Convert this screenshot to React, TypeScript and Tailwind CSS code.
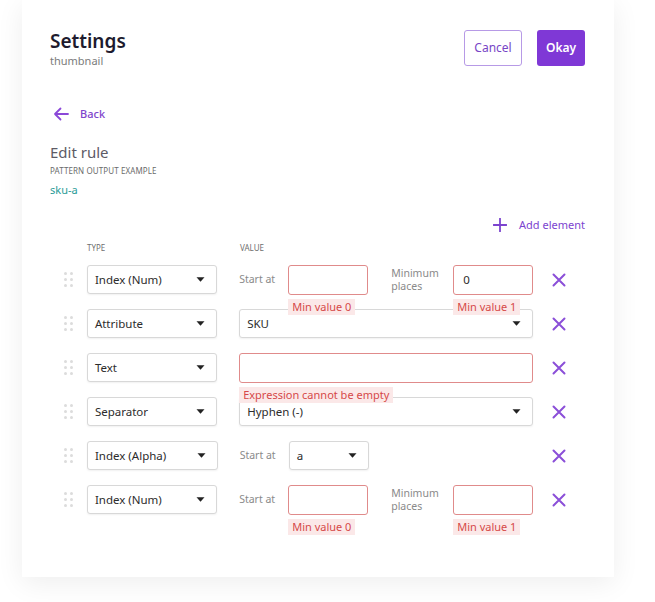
import { ReactNode } from 'react';

const font = { fontFamily: '"Noto Sans", "Open Sans", sans-serif' };

function DragHandle() {
  return (
    <div className="w-[37px] flex justify-start pl-[14px]">
      <div className="grid grid-cols-2 gap-x-[3px] gap-y-[3px]">
        {Array.from({ length: 6 }).map((_, i) => (
          <span key={i} className="block w-[3px] h-[3px] rounded-full bg-[#dcdcdc]" />
        ))}
      </div>
    </div>
  );
}

function Caret() {
  return (
    <svg width="9" height="5" viewBox="0 0 9 5" className="shrink-0">
      <path d="M0.5 0.3 L8.5 0.3 L4.5 4.8 Z" fill="#222" />
    </svg>
  );
}

function Select({ value, width }: { value: string; width: string }) {
  return (
    <div
      className={`${width} h-[29px] flex items-center justify-between pl-[7px] pr-[11px] border border-[#d8d8d8] rounded-[3px] bg-white shadow-[0_1px_2px_rgba(0,0,0,0.06)] text-[11.5px] text-[#2c2c2c]`}
    >
      <span>{value}</span>
      <Caret />
    </div>
  );
}

function ErrorTag({ children }: { children: ReactNode }) {
  return (
    <span className="absolute left-0 top-[34px] px-[4px] h-[16px] leading-[16px] bg-[#fbe8e8] text-[#d64848] text-[11px] whitespace-nowrap z-10">
      {children}
    </span>
  );
}

function NumInput({ value, error }: { value?: string; error: string }) {
  return (
    <div className="relative">
      <div className="w-[80px] h-[30px] flex items-center px-[9px] border border-[#e08b8b] rounded-[3px] bg-white text-[11.5px] text-[#2c2c2c]">
        {value}
      </div>
      <ErrorTag>{error}</ErrorTag>
    </div>
  );
}

function Label({ children, width }: { children: ReactNode; width: string }) {
  return <div className={`${width} text-[10.5px] leading-[13px] text-[#8a8a8a]`}>{children}</div>;
}

function RemoveIcon() {
  return (
    <div className="w-[52px] flex justify-end pr-[19px]">
      <svg width="14" height="14" viewBox="0 0 14 14">
        <path d="M1.5 1.5 L12.5 12.5 M12.5 1.5 L1.5 12.5" stroke="#8b4fd8" strokeWidth="2" strokeLinecap="round" />
      </svg>
    </div>
  );
}

function IndexNumValue({ places }: { places?: string }) {
  return (
    <div className="flex items-center">
      <Label width="w-[49px]">Start at</Label>
      <NumInput error="Min value 0" />
      <div className="w-[23px]" />
      <Label width="w-[62px]">
        Minimum
        <br />
        places
      </Label>
      <NumInput value={places} error="Min value 1" />
    </div>
  );
}

function Row({ type, children }: { type: string; children: ReactNode }) {
  return (
    <div className="flex items-center h-[29px] mb-[15px]">
      <DragHandle />
      <Select value={type} width="w-[131px]" />
      <div className="w-[22px]" />
      <div className="w-[294px] relative">{children}</div>
      <RemoveIcon />
    </div>
  );
}

export default function App() {
  return (
    <div className="w-[655px] h-[602px] bg-white overflow-hidden pl-[22px]" style={font}>
      <div className="w-[592px] h-[577px] bg-white shadow-[0_6px_26px_rgba(0,0,0,0.07)] pl-[28px] pr-[29px] pt-[30px]">
        {/* Header */}
        <div className="flex justify-between items-start">
          <div>
            <div className="text-[19px] leading-[20px] font-semibold text-[#1e1b2e] pt-[1px]">Settings</div>
            <div className="text-[11px] leading-[14px] text-[#7b7b7b] mt-[3px]">thumbnail</div>
          </div>
          <div className="flex gap-[15px]">
            <button className="w-[58px] h-[36px] border border-[#b79ae6] rounded-[3px] text-[12px] text-[#7845c6] bg-white">
              Cancel
            </button>
            <button className="w-[48px] h-[36px] rounded-[3px] text-[12px] font-semibold text-white bg-[#7f38d6]">
              Okay
            </button>
          </div>
        </div>

        {/* Back */}
        <div className="flex items-center mt-[38px] h-[16px]">
          <svg width="16" height="14" viewBox="0 0 16 14" className="ml-[3px]">
            <path d="M15 7 H2 M7.5 1.5 L2 7 L7.5 12.5" stroke="#8b48d8" strokeWidth="1.8" fill="none" strokeLinecap="round" strokeLinejoin="round" />
          </svg>
          <span className="ml-[11px] text-[11px] text-[#7f45cc] font-medium">Back</span>
        </div>

        {/* Rule info */}
        <div className="mt-[20px] text-[15px] leading-[20px] text-[#5d5b66]">Edit rule</div>
        <div className="mt-[3px] text-[8px] leading-[12px] text-[#6b6b6b] uppercase tracking-[0.1px]">Pattern output example</div>
        <div className="mt-[5px] text-[11px] leading-[16px] text-[#2a9c98]">sku-a</div>

        {/* Add element */}
        <div className="mt-[19px] flex justify-end items-center h-[16px]">
          <svg width="14" height="14" viewBox="0 0 14 14">
            <path d="M7 0.5 V13.5 M0.5 7 H13.5" stroke="#7c44cf" strokeWidth="1.8" strokeLinecap="round" />
          </svg>
          <span className="ml-[12px] text-[11px] text-[#7c44cf]">Add element</span>
        </div>

        {/* Table header */}
        <div className="mt-[9px] flex text-[8px] leading-[12px] text-[#6f6f6f] uppercase">
          <div className="w-[37px]" />
          <div className="w-[153px]">Type</div>
          <div>Value</div>
        </div>

        {/* Rows */}
        <div className="mt-[11px]">
          <Row type="Index (Num)">
            <IndexNumValue places="0" />
          </Row>
          <Row type="Attribute">
            <Select value="SKU" width="w-[294px]" />
          </Row>
          <Row type="Text">
            <div className="relative">
              <div className="w-[294px] h-[30px] border border-[#e08b8b] rounded-[3px] bg-white" />
              <ErrorTag>Expression cannot be empty</ErrorTag>
            </div>
          </Row>
          <Row type="Separator">
            <Select value="Hyphen (-)" width="w-[294px]" />
          </Row>
          <Row type="Index (Alpha)">
            <div className="flex items-center">
              <Label width="w-[49px]">Start at</Label>
              <Select value="a" width="w-[80px]" />
            </div>
          </Row>
          <Row type="Index (Num)">
            <IndexNumValue />
          </Row>
        </div>
      </div>
    </div>
  );
}
